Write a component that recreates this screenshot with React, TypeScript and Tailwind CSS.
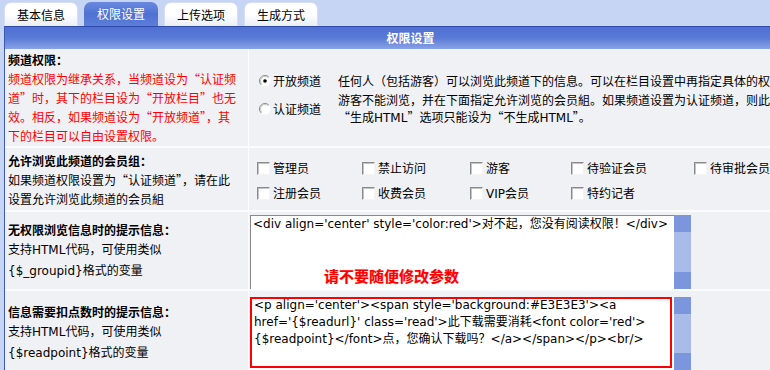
import React from 'react';

const TABS = [
  { label: '基本信息' },
  { label: '权限设置', active: true },
  { label: '上传选项' },
  { label: '生成方式' },
];

const GROUPS = [
  ['管理员', '禁止访问', '游客', '待验证会员', '待审批会员'],
  ['注册会员', '收费会员', 'VIP会员', '特约记者'],
];

// latin runs (html, variables) use a verdana-like face
const L = ({ children }: { children: React.ReactNode }) => (
  <span className="font-['DejaVu_Sans',sans-serif]">{children}</span>
);

const Radio = ({ checked }: { checked?: boolean }) => (
  <svg width="12" height="12" viewBox="0 0 12 12" className="shrink-0">
    <circle cx="6" cy="6" r="5.5" fill="#fff" />
    <path d="M9.9 2.1 A5.5 5.5 0 0 0 2.1 9.9" stroke="#8a8a8a" strokeWidth="1" fill="none" />
    <path d="M9.2 2.8 A4.5 4.5 0 0 0 2.8 9.2" stroke="#c8c8c8" strokeWidth="1" fill="none" />
    {checked && <circle cx="6" cy="6" r="1.8" fill="#000" />}
  </svg>
);

const Checkbox = () => (
  <div className="w-[13px] h-[13px] shrink-0 bg-white border border-t-[#8a8a8a] border-l-[#8a8a8a] border-r-[#f4f4f4] border-b-[#f4f4f4] shadow-[inset_1px_1px_0_#c4c4c4]" />
);

const Scrollbar = () => (
  <div className="w-[17px] flex flex-col shrink-0">
    <div className="h-[17px] bg-[#7c96de]" />
    <div className="flex-1 bg-[#a8bbe9]" />
    <div className="h-[17px] bg-[#7c96de]" />
  </div>
);

export default function App() {
  return (
    <div className="w-[770px] h-[370px] overflow-hidden bg-[#c7d5f4] text-[12px] text-black font-['Noto_Sans_CJK_SC','DejaVu_Sans',sans-serif]">
      {/* tabs */}
      <div className="flex gap-[6px] pl-[4px] pt-[2px] h-[26px]">
        {TABS.map((t) => (
          <div
            key={t.label}
            className={
              t.active
                ? 'w-[74px] h-[24px] rounded-t-[7px] bg-gradient-to-b from-[#6a89de] via-[#4f71d3] to-[#5d7ed8] text-white flex items-center justify-center'
                : 'w-[74px] h-[24px] rounded-t-[7px] bg-gradient-to-b from-white via-white to-[#e9edf5] border border-b-0 border-[#d6def0] flex items-center justify-center'
            }
          >
            {t.label}
          </div>
        ))}
      </div>

      <div className="w-[812px] ml-[4px] border-l border-[#3a57b6]">
        {/* title bar */}
        <div className="h-[23px] border-t border-[#2e4bab] bg-gradient-to-b from-[#4f70d2] via-[#5a7ad6] to-[#8aa3e6] flex items-center justify-center text-white font-bold">
          权限设置
        </div>

        <div className="flex flex-col gap-[2px] bg-[#fbfcfd]">
          {/* channel permission */}
          <div className="grid grid-cols-[243px_1fr] gap-x-px h-[97px]">
            <div className="bg-[#f0f1f5] pl-[3px] flex flex-col justify-center leading-[19px] whitespace-nowrap">
              <div className="font-bold">频道权限：</div>
              <div className="text-[#ff0000]">
                频道权限为继承关系，当频道设为“认证频
                <br />
                道”时，其下的栏目设为“开放栏目”也无
                <br />
                效。相反，如果频道设为“开放频道”，其
                <br />
                下的栏目可以自由设置权限。
              </div>
            </div>
            <div className="bg-[#f0f1f5] flex flex-col justify-center pt-[3px] whitespace-nowrap">
              <div className="flex items-center h-[20px]">
                <div className="w-[89px] pl-[10px] flex items-center gap-[2px] shrink-0">
                  <Radio checked />
                  <span>开放频道</span>
                </div>
                <div>任何人（包括游客）可以浏览此频道下的信息。可以在栏目设置中再指定具体的权限。</div>
              </div>
              <div className="flex items-center">
                <div className="w-[89px] pl-[10px] flex items-center gap-[2px] shrink-0">
                  <Radio />
                  <span>认证频道</span>
                </div>
                <div className="leading-[17px]">
                  游客不能浏览，并在下面指定允许浏览的会员組。如果频道设置为认证频道，则此频道的
                  <br />
                  “生成<L>HTML</L>”选项只能设为“不生成<L>HTML</L>”。
                </div>
              </div>
            </div>
          </div>

          {/* member groups */}
          <div className="grid grid-cols-[243px_1fr] gap-x-px h-[62px]">
            <div className="bg-[#f0f1f5] pl-[3px] flex flex-col justify-center leading-[19px] whitespace-nowrap">
              <div className="font-bold">允许浏览此频道的会员组：</div>
              <div>如果频道权限设置为“认证频道”，请在此</div>
              <div>设置允许浏览此频道的会员組</div>
            </div>
            <div className="bg-[#f0f1f5] flex flex-col justify-center pt-[3px] pl-[8px] whitespace-nowrap">
              {GROUPS.map((row, i) => (
                <div key={i} className="grid grid-cols-[105px_108px_101px_123px_120px] h-[25px]">
                  {row.map((g) => (
                    <div key={g} className="flex items-center gap-[3px]">
                      <Checkbox />
                      <span>{g === 'VIP会员' ? <><L>VIP</L>会员</> : g}</span>
                    </div>
                  ))}
                </div>
              ))}
            </div>
          </div>

          {/* no permission message */}
          <div className="grid grid-cols-[243px_1fr] gap-x-px h-[77px]">
            <div className="bg-[#f0f1f5] pl-[3px] flex flex-col justify-center leading-[19px] whitespace-nowrap">
              <div className="font-bold">无权限浏览信息时的提示信息：</div>
              <div>支持<L>HTML</L>代码，可使用类似</div>
              <div><L>{'{$_groupid}'}</L>格式的变量</div>
            </div>
            <div className="bg-[#f0f1f5]">
              <div className="relative flex ml-px mt-[3px] h-[74px]">
                <div className="w-[424px] bg-white border-t border-l border-[#8a8a8a] pl-[2px] leading-[17px] whitespace-nowrap overflow-hidden font-['DejaVu_Sans','Noto_Sans_CJK_SC',sans-serif]">
                  {"<div align='center' style='color:red'>"}对不起，您没有阅读权限！{'</div>'}
                </div>
                <Scrollbar />
                <div className="absolute left-[74px] top-[51px] text-[15px] leading-[20px] font-bold text-[#ff0000] [text-shadow:0_0_1px_#ff9a9a]">
                  请不要随便修改参数
                </div>
              </div>
            </div>
          </div>

          {/* read point message */}
          <div className="grid grid-cols-[243px_1fr] gap-x-px h-[82px]">
            <div className="bg-[#f0f1f5] pl-[3px] flex flex-col justify-center leading-[19px] whitespace-nowrap">
              <div className="font-bold">信息需要扣点数时的提示信息：</div>
              <div>支持<L>HTML</L>代码，可使用类似</div>
              <div><L>{'{$readpoint}'}</L>格式的变量</div>
            </div>
            <div className="bg-[#f0f1f5]">
              <div className="relative flex ml-px mt-[6px] h-[73px]">
                <div className="w-[424px] bg-white pl-[4px] leading-[17px] whitespace-nowrap overflow-hidden font-['DejaVu_Sans','Noto_Sans_CJK_SC',sans-serif]">
                  {"<p align='center'><span style='background:#E3E3E3'><a"}
                  <br />
                  {"href='{$readurl}' class='read'>"}此下载需要消耗{"<font color='red'>"}
                  <br />
                  {'{$readpoint}</font>'}点，您确认下载吗？{'</a></span></p><br/>'}
                </div>
                <Scrollbar />
                <div className="absolute left-0 top-0 w-[422px] h-[71px] border-2 border-[#ff0000]" />
              </div>
            </div>
          </div>
        </div>
      </div>
    </div>
  );
}
